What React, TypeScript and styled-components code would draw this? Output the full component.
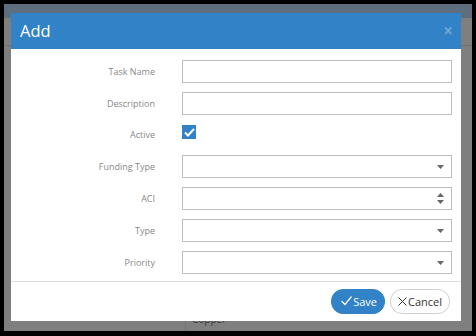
import React, { FC } from "react";
import styled, { createGlobalStyle } from "styled-components";

const GlobalStyle = createGlobalStyle`
  html, body {
    margin: 0;
    padding: 0;
    background: #000;
  }
  body {
    font-family: "Open Sans", "Liberation Sans", sans-serif;
  }
`;

const StyledFrame = styled.div`
  width: 476px;
  height: 336px;
  padding: 4px;
  box-sizing: border-box;
  background: #000;
`;

const StyledPage = styled.div`
  position: relative;
  width: 468px;
  height: 327px;
  background: #7f7f7f;
  overflow: hidden;
`;

const StyledTopBar = styled.div`
  height: 14px;
  background: #5f6e7e;
`;

const StyledPageRow = styled.div`
  height: 27px;
  border-bottom: 1px solid #727272;
`;

const StyledPageBody = styled.div`
  display: grid;
  grid-template-columns: 182px 1fr;
  height: 290px;
`;

const StyledPageCol = styled.div<{ $divider?: boolean }>`
  border-right: ${(p) => (p.$divider ? "1px solid #767676" : "none")};
  padding: 266px 0 0 6px;
  font-size: 10px;
  color: #3a3a3a;
`;

const StyledModal = styled.div`
  position: absolute;
  top: 9px;
  left: 7px;
  width: 450px;
  height: 308px;
  background: #fff;
  display: flex;
  flex-direction: column;
`;

const StyledHeader = styled.div`
  height: 36px;
  background: #3182c6;
  display: flex;
  align-items: center;
  justify-content: space-between;
  padding: 0 8px 0 9px;
`;

const StyledTitle = styled.div`
  color: #fff;
  font-size: 16.5px;
  font-weight: 400;
  margin-top: -1px;
`;

const StyledClose = styled.div`
  color: rgba(255, 255, 255, 0.3);
  font-size: 17px;
  font-weight: 700;
  margin-top: -2px;
`;

const StyledBody = styled.div`
  flex: 1;
  padding: 11px 9px 0 0;
  display: grid;
  grid-template-columns: 144px 1fr;
  grid-template-rows: 23px 23px 22px 23px 23px 23px 23px;
  row-gap: 9px;
  column-gap: 27px;
  align-items: center;
`;

const StyledLabel = styled.div<{ $low?: boolean }>`
  text-align: right;
  font-size: 9px;
  color: #888;
  align-self: ${(p) => (p.$low ? "end" : "center")};
  padding-bottom: ${(p) => (p.$low ? "5px" : "0")};
`;

const StyledInput = styled.div`
  height: 23px;
  border: 1px solid #bdbdbd;
  box-sizing: border-box;
  display: flex;
  align-items: center;
  justify-content: flex-end;
  padding-right: 7px;
`;

const StyledCheckWrap = styled.div`
  align-self: start;
  padding-top: 1px;
`;

const StyledCheck = styled.div`
  width: 14px;
  height: 14px;
  background: #3182c6;
  display: flex;
  align-items: center;
  justify-content: center;
`;

const StyledFooter = styled.div`
  height: 40px;
  border-top: 1px solid #dcdcdc;
  box-sizing: border-box;
  display: flex;
  align-items: center;
  justify-content: flex-end;
  gap: 5px;
  padding: 0 11px 1px 0;
`;

const StyledButton = styled.div<{ $primary?: boolean }>`
  height: 25px;
  box-sizing: border-box;
  border-radius: 12px;
  display: flex;
  align-items: center;
  gap: 1px;
  padding: ${(p) => (p.$primary ? "0 7px 0 9px" : "0 7px 0 7px")};
  font-size: 11px;
  background: ${(p) => (p.$primary ? "#3182c6" : "#fff")};
  color: ${(p) => (p.$primary ? "#fff" : "#333")};
  border: 1px solid ${(p) => (p.$primary ? "#3182c6" : "#cfcfcf")};
`;

const Caret: FC = () => (
  <svg width="7" height="4" viewBox="0 0 7 4">
    <path d="M0 0H7L3.5 4Z" fill="#666" />
  </svg>
);

const Spinner: FC = () => (
  <svg width="7" height="11" viewBox="0 0 7 11">
    <path d="M0 4L3.5 0L7 4Z" fill="#666" />
    <path d="M0 7H7L3.5 11Z" fill="#666" />
  </svg>
);

const fields: { label: string; kind: "text" | "check" | "select" | "number" }[] = [
  { label: "Task Name", kind: "text" },
  { label: "Description", kind: "text" },
  { label: "Active", kind: "check" },
  { label: "Funding Type", kind: "select" },
  { label: "ACI", kind: "number" },
  { label: "Type", kind: "select" },
  { label: "Priority", kind: "select" },
];

export default function App() {
  return (
    <>
      <GlobalStyle />
      <StyledFrame>
        <StyledPage>
          <StyledTopBar />
          <StyledPageRow />
          <StyledPageBody>
            <StyledPageCol $divider />
            <StyledPageCol>Copper</StyledPageCol>
          </StyledPageBody>
          <StyledModal>
            <StyledHeader>
              <StyledTitle>Add</StyledTitle>
              <StyledClose>×</StyledClose>
            </StyledHeader>
            <StyledBody>
              {fields.map((f) => (
                <React.Fragment key={f.label}>
                  <StyledLabel $low={f.kind === "check"}>{f.label}</StyledLabel>
                  {f.kind === "check" ? (
                    <StyledCheckWrap>
                      <StyledCheck>
                        <svg width="11" height="9" viewBox="0 0 11 9">
                          <path
                            d="M1 4.5L4 7.5L10 1"
                            stroke="#fff"
                            strokeWidth="2"
                            fill="none"
                          />
                        </svg>
                      </StyledCheck>
                    </StyledCheckWrap>
                  ) : (
                    <StyledInput>
                      {f.kind === "select" && <Caret />}
                      {f.kind === "number" && <Spinner />}
                    </StyledInput>
                  )}
                </React.Fragment>
              ))}
            </StyledBody>
            <StyledFooter>
              <StyledButton $primary>
                <svg width="11" height="10" viewBox="0 0 11 10">
                  <path d="M0.5 5L4 8.5L10.5 0.5" stroke="#fff" strokeWidth="1.2" fill="none" />
                </svg>
                Save
              </StyledButton>
              <StyledButton>
                <svg width="9" height="9" viewBox="0 0 9 9">
                  <path d="M0.5 0.5L8.5 8.5M8.5 0.5L0.5 8.5" stroke="#333" strokeWidth="1" fill="none" />
                </svg>
                Cancel
              </StyledButton>
            </StyledFooter>
          </StyledModal>
        </StyledPage>
      </StyledFrame>
    </>
  );
}
